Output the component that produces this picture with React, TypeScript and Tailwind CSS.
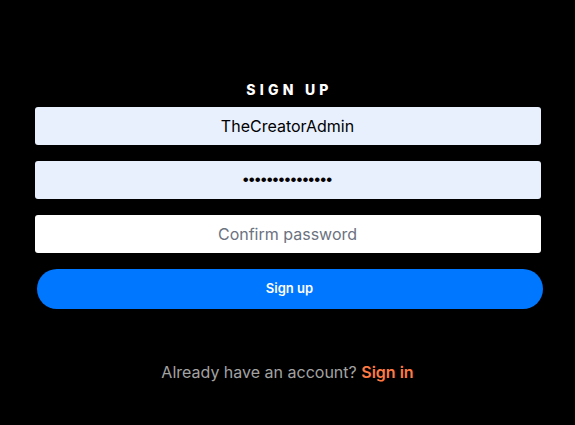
import React from "react";

export default function App() {
  return (
    <div className="w-[575px] h-[425px] bg-black flex flex-col items-center" style={{ fontFamily: '"Inter", "Open Sans", sans-serif' }}>
      <div className="w-[506px] flex flex-col pt-[81px]">
        <h1 className="text-white text-[14px] font-extrabold tracking-[0.3em] text-center leading-[18px] mb-[8px] pl-[4px]">SIGN UP</h1>
        <div className="flex flex-col gap-[16px]">
          <input
            readOnly
            value="TheCreatorAdmin"
            className="h-[38px] w-full rounded-[3px] bg-[#e8f0fe] text-center text-[16px] text-black outline-none"
          />
          <input
            readOnly
            type="password"
            value="•••••••••••••••"
            className="h-[38px] w-full rounded-[3px] bg-[#e8f0fe] text-center text-[17px] text-black outline-none"
            style={{ fontFamily: '"Liberation Sans", sans-serif' }}
          />
          <input
            readOnly
            type="password"
            placeholder="Confirm password"
            className="h-[38px] w-full rounded-[3px] bg-white text-center text-[16px] text-black placeholder:text-[#6b7280] outline-none"
          />
          <button className="h-[40px] w-full ml-[2px] rounded-full bg-[#0077ff] text-white text-[13px] font-semibold">
            Sign up
          </button>
        </div>
        <p className="mt-[52px] text-center text-[16px] leading-[22px] text-[#a3a3a3]">
          Already have an account? <span className="text-[#ff7a45] font-semibold">Sign in</span>
        </p>
      </div>
    </div>
  );
}
